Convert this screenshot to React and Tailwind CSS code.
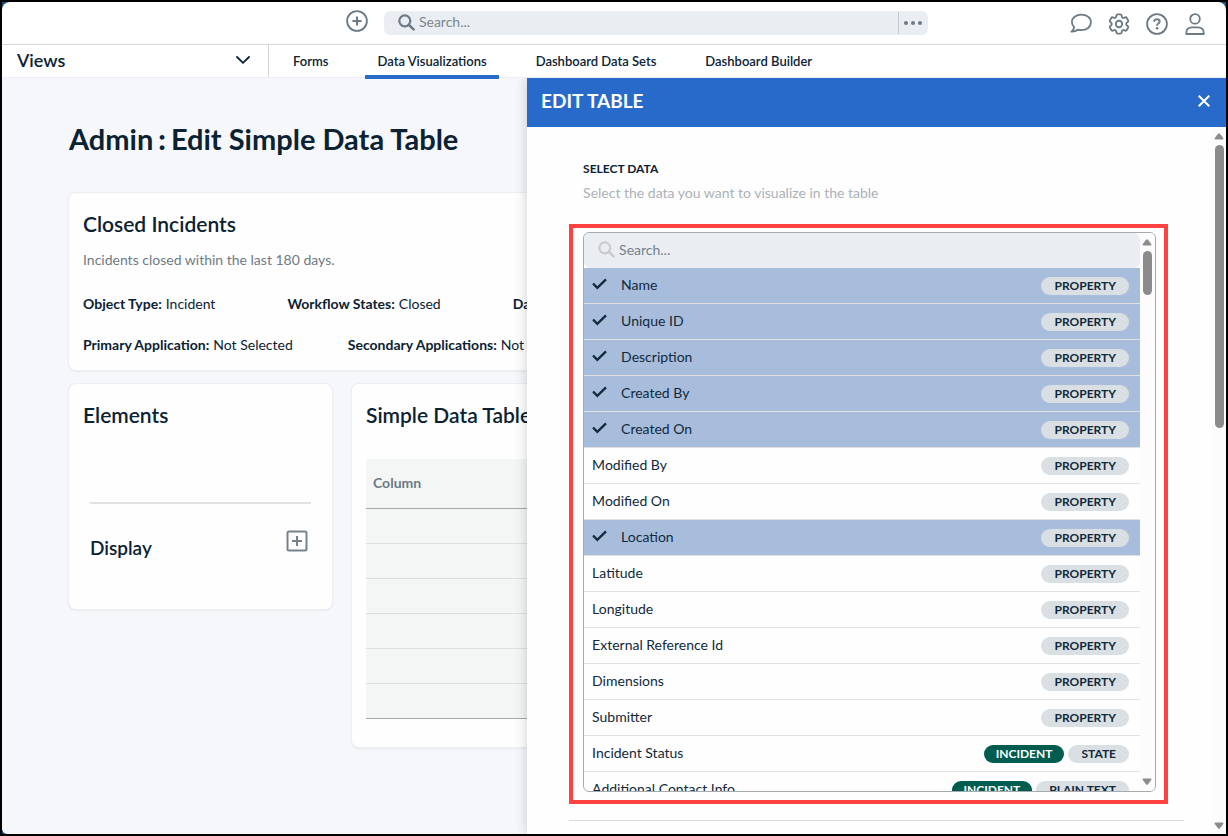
import { useState } from 'react';
import clsx from 'clsx';

const tabs = [
  { label: 'Forms' },
  { label: 'Data Visualizations', active: true },
  { label: 'Dashboard Data Sets' },
  { label: 'Dashboard Builder' },
];

const fields = [
  { name: 'Name', type: 'PROPERTY', selected: true },
  { name: 'Unique ID', type: 'PROPERTY', selected: true },
  { name: 'Description', type: 'PROPERTY', selected: true },
  { name: 'Created By', type: 'PROPERTY', selected: true },
  { name: 'Created On', type: 'PROPERTY', selected: true },
  { name: 'Modified By', type: 'PROPERTY' },
  { name: 'Modified On', type: 'PROPERTY' },
  { name: 'Location', type: 'PROPERTY', selected: true },
  { name: 'Latitude', type: 'PROPERTY' },
  { name: 'Longitude', type: 'PROPERTY' },
  { name: 'External Reference Id', type: 'PROPERTY' },
  { name: 'Dimensions', type: 'PROPERTY' },
  { name: 'Submitter', type: 'PROPERTY' },
  { name: 'Incident Status', type: 'STATE', owner: 'INCIDENT' },
  { name: 'Additional Contact Info', type: 'PLAIN TEXT', owner: 'INCIDENT' },
];

function SearchIcon({ className }) {
  return (
    <svg
      viewBox="0 0 17 17"
      className={clsx('mb-[2px] h-[17px] w-[17px] shrink-0', className)}
      fill="none"
      stroke="currentColor"
      strokeWidth="2.2"
      strokeLinecap="round"
      aria-hidden="true"
    >
      <circle cx="6.8" cy="6.8" r="5.5" />
      <path d="M11 11l4.6 4.4" strokeWidth="2.6" />
    </svg>
  );
}

function CirclePlusIcon() {
  return (
    <svg
      viewBox="0 0 22 22"
      className="h-[22px] w-[22px]"
      fill="none"
      stroke="currentColor"
      strokeLinecap="round"
      aria-hidden="true"
    >
      <circle cx="11" cy="11" r="9.9" strokeWidth="1.8" />
      <path d="M11 7.2v7.6M7.2 11h7.6" strokeWidth="2" />
    </svg>
  );
}

function ChatIcon() {
  return (
    <svg
      viewBox="0 0 22 22"
      className="h-[22px] w-[22px]"
      fill="none"
      stroke="currentColor"
      strokeWidth="1.8"
      strokeLinejoin="round"
      aria-hidden="true"
    >
      <path d="M11.4 1.7C6 1.7 1.9 4.800 1.900 8.900c0 2.200.9 4 2.400 5.300-.3 1.700-1.200 3.100-2.900 4.400 2.500.2 4.700-.5 6.300-1.900 1.200.4 2.400.5 3.700.5 5.400 0 9.500-3.400 9.500-7.900S16.800 1.700 11.400 1.700z" />
    </svg>
  );
}

function GearIcon() {
  return (
    <svg
      viewBox="1.8 1.8 20.4 20.4"
      className="h-[22px] w-[22px]"
      fill="none"
      stroke="currentColor"
      strokeWidth="1.7"
      strokeLinejoin="round"
      aria-hidden="true"
    >
      <path d="M9.594 3.94c.09-.542.56-.94 1.11-.94h2.593c.55 0 1.020.398 1.110.940l.213 1.281c.063.374.313.686.645.870.074.040.147.083.220.127.325.196.720.257 1.075.124l1.217-.456a1.125 1.125 0 0 1 1.370.490l1.296 2.247a1.125 1.125 0 0 1-.260 1.431l-1.003.827c-.293.241-.438.613-.430.992a7.723 7.723 0 0 1 0 .255c-.008.378.137.750.430.991l1.004.827c.424.350.534.955.260 1.430l-1.298 2.247a1.125 1.125 0 0 1-1.369.491l-1.217-.456c-.355-.133-.750-.072-1.076.124a6.470 6.470 0 0 1-.220.128c-.331.183-.581.495-.644.869l-.213 1.281c-.090.543-.560.940-1.110.940h-2.594c-.550 0-1.019-.398-1.110-.940l-.213-1.281c-.062-.374-.312-.686-.644-.870a6.520 6.520 0 0 1-.220-.127c-.325-.196-.720-.257-1.076-.124l-1.217.456a1.125 1.125 0 0 1-1.369-.490l-1.297-2.247a1.125 1.125 0 0 1 .260-1.431l1.004-.827c.292-.240.437-.613.430-.991a6.932 6.932 0 0 1 0-.255c.007-.380-.138-.751-.430-.992l-1.004-.827a1.125 1.125 0 0 1-.260-1.430l1.297-2.247a1.125 1.125 0 0 1 1.370-.491l1.216.456c.356.133.751.072 1.076-.124.072-.044.146-.086.220-.128.332-.183.582-.495.644-.869l.214-1.280z" />
      <circle cx="12" cy="12" r="3" />
    </svg>
  );
}

function HelpIcon() {
  return (
    <svg
      viewBox="0 0 22 22"
      className="h-[22px] w-[22px]"
      fill="none"
      stroke="currentColor"
      strokeWidth="1.8"
      strokeLinecap="round"
      strokeLinejoin="round"
      aria-hidden="true"
    >
      <circle cx="11" cy="11" r="9.9" />
      <path d="M8.2 8c.2-1.2 1.2-1.800 2.600-1.800 1.700 0 2.900.8 2.900 2.300 0 1.900-2.600 1.900-2.600 3.600" strokeWidth="1.9" />
      <circle cx="11.1" cy="15.2" r="1.3" fill="currentColor" stroke="none" />
    </svg>
  );
}

function PersonIcon() {
  return (
    <svg
      viewBox="0 0 22 22"
      className="h-[22px] w-[22px]"
      fill="none"
      stroke="currentColor"
      strokeWidth="1.8"
      strokeLinejoin="round"
      aria-hidden="true"
    >
      <circle cx="11" cy="5.9" r="4.8" />
      <path d="M2.3 21v-1.300c0-3.300 2.300-5.400 5.500-5.400h6.400c3.200 0 5.500 2.100 5.500 5.400V21z" />
    </svg>
  );
}

function Scrollbar({ thumbClass, className }) {
  return (
    <div
      className={clsx(
        'flex w-[14px] shrink-0 flex-col items-center bg-[#fcfcfc] text-[#8b8b8b]',
        className
      )}
      aria-hidden="true"
    >
      <svg viewBox="0 0 10 7" className="h-[7px] w-[10px]" fill="currentColor">
        <path d="M4 .8q1-1 2 0L9.2 5q.6 1.500-.7 1.500h-7Q.2 6.500.8 5z" />
      </svg>
      <div className={clsx('mt-[5px] w-[9px] rounded-full bg-[#8b8b8b]', thumbClass)} />
      <svg viewBox="0 0 10 7" className="mt-auto h-[7px] w-[10px]" fill="currentColor">
        <path d="M4 6.200q1 1 2 0L9.200 2Q9.800.5 8.500.5h-7Q.2.5.8 2z" />
      </svg>
    </div>
  );
}

function Pill({ dark, children }) {
  return (
    <span
      className={clsx(
        'flex h-[18px] items-center rounded-full text-xs font-bold',
        dark ? 'bg-[#005c4f] px-3 text-white' : 'bg-[#dadfe3] px-[13px] text-[#10293b]'
      )}
    >
      {children}
    </span>
  );
}

function FieldRow({ field }) {
  const [checked, setChecked] = useState(Boolean(field.selected));
  return (
    <li>
      <label
        className={clsx(
          'relative flex h-9 items-center border-b border-[#dfe1e3] pr-[11px] pl-2',
          checked && 'bg-[#a8bddc]'
        )}
      >
        <input
          type="checkbox"
          className="sr-only"
          checked={checked}
          onChange={(e) => setChecked(e.target.checked)}
        />
        {checked && (
          <svg
            viewBox="0 0 15 12"
            className="mr-[14px] mb-[3px] h-3 w-[15px]"
            fill="none"
            stroke="currentColor"
            strokeWidth="2.3"
            aria-hidden="true"
          >
            <path d="M1 5.500l4.300 4.400L14 1.400" />
          </svg>
        )}
        <span className="flex-1 truncate pb-[2px]">{field.name}</span>
        <span className="flex gap-1">
          {field.owner && <Pill dark>{field.owner}</Pill>}
          <Pill>{field.type}</Pill>
        </span>
      </label>
    </li>
  );
}

function Header() {
  return (
    <header className="flex h-[43px] shrink-0 items-center border-b border-[#d5d7da] pr-5 pl-[28.1%] text-[#6c7a86]">
      <button type="button" aria-label="Create" className="-mt-1 mr-4">
        <CirclePlusIcon />
      </button>
      <div className="flex h-6 max-w-[544px] flex-1 items-center rounded-md bg-[#eaedf2]">
        <SearchIcon className="ml-[14px]" />
        <input
          type="text"
          aria-label="Search"
          placeholder="Search..."
          className="ml-1 min-w-0 flex-1 pb-[2px] outline-none placeholder:text-[#7b8790]"
        />
        <button
          type="button"
          aria-label="Search options"
          className="flex h-[22px] w-[30px] items-center justify-center gap-[3px] border-l border-[#c4c7ca]"
        >
          <span className="h-1 w-1 rounded-full bg-[#6c7a86]" />
          <span className="h-1 w-1 rounded-full bg-[#6c7a86]" />
          <span className="h-1 w-1 rounded-full bg-[#6c7a86]" />
        </button>
      </div>
      <div className="ml-auto flex items-center gap-4 pt-[2px]">
        <button type="button" aria-label="Messages">
          <ChatIcon />
        </button>
        <button type="button" aria-label="Settings">
          <GearIcon />
        </button>
        <button type="button" aria-label="Help">
          <HelpIcon />
        </button>
        <button type="button" aria-label="Profile">
          <PersonIcon />
        </button>
      </div>
    </header>
  );
}

function Nav() {
  return (
    <nav className="relative z-10 flex h-[33px] shrink-0 border-b border-[#eceff3] bg-white">
      <button
        type="button"
        className="flex w-[267px] shrink-0 items-center justify-between border-r border-[#d5d7da] pr-[18px] pb-[2px] pl-[15px] text-lg leading-none font-semibold"
      >
        Views
        <svg
          viewBox="0 0 14 8"
          className="h-2 w-[14px]"
          fill="none"
          stroke="currentColor"
          strokeWidth="1.8"
          strokeLinecap="round"
          aria-hidden="true"
        >
          <path d="M1 1l6 5.800L13 1" />
        </svg>
      </button>
      <div className="flex gap-[25px] pl-3 text-[13px] font-semibold">
        {tabs.map((tab) => (
          <a
            key={tab.label}
            href="#"
            className={clsx(
              'flex h-[34px] items-center border-b-4 px-3 pt-[2px] whitespace-nowrap',
              tab.active ? 'border-[#286aca]' : 'border-transparent'
            )}
          >
            {tab.label}
          </a>
        ))}
      </div>
    </nav>
  );
}

function Card({ title, className, children }) {
  return (
    <section
      className={clsx(
        'rounded-lg border border-[#eceef2] bg-[#fefefe] px-[14px] shadow-xs',
        className
      )}
    >
      <h2 className="pt-[17px] text-[21px] leading-7 font-semibold whitespace-nowrap">{title}</h2>
      {children}
    </section>
  );
}

function Detail({ label, children }) {
  return (
    <div className="flex gap-1">
      <dt className="font-bold">{label}</dt>
      <dd>{children}</dd>
    </div>
  );
}

function Builder() {
  return (
    <main className="h-full overflow-hidden pt-[41px] pl-[66px] whitespace-nowrap">
      <h1 className="flex gap-[5px] pl-px text-[29px] leading-10 font-bold">
        <span>Admin</span>
        <span className="font-black">:</span>
        <span>Edit Simple Data Table</span>
      </h1>
      <Card title="Closed Incidents" className="mt-[33px] h-[179px]">
        <p className="mt-3 leading-5 text-[#6f7b85]">
          Incidents closed within the last 180 days.
        </p>
        <dl className="mt-6 flex gap-[72px] leading-5">
          <Detail label="Object Type:">Incident</Detail>
          <Detail label="Workflow States:">Closed</Detail>
          <Detail label="Data Set Type:">Incident</Detail>
        </dl>
        <dl className="mt-[21px] flex gap-[55px] leading-5">
          <Detail label="Primary Application:">Not Selected</Detail>
          <Detail label="Secondary Applications:">Not Selected</Detail>
        </dl>
      </Card>
      <div className="mt-3 flex items-start gap-[18px]">
        <Card title="Elements" className="h-[227px] w-[265px] shrink-0">
          <div className="mt-[73px] mr-[7px] ml-[7px] flex items-start justify-between border-t-2 border-[#e1e3e3] pt-[26px]">
            <h3 className="pt-[6px] text-[19px] leading-6 font-semibold">Display</h3>
            <button type="button" aria-label="Add display element" className="mr-[3px] text-[#76828b]">
              <svg
                viewBox="0 0 22 22"
                className="h-[22px] w-[22px]"
                fill="none"
                stroke="currentColor"
                strokeWidth="2"
                aria-hidden="true"
              >
                <rect x="1.5" y="1.5" width="19" height="19" rx="1.500" />
                <path d="M11 6v10M6 11h10" />
              </svg>
            </button>
          </div>
        </Card>
        <Card title="Simple Data Table" className="h-[365px] flex-1">
          <table className="mt-[30px] w-full bg-[#f4f6f6] text-left">
            <thead>
              <tr className="h-[49px] border-b border-[#a3a9ae]">
                <th className="px-[7px] font-bold text-[#6c7a86]">Column</th>
              </tr>
            </thead>
            <tbody>
              {[1, 2, 3, 4, 5, 6].map((row) => (
                <tr key={row} className="h-[35px] border-b border-[#dddfe1] last:border-[#a3a9ae]">
                  <td />
                </tr>
              ))}
            </tbody>
          </table>
        </Card>
      </div>
    </main>
  );
}

function EditTableDrawer() {
  return (
    <aside className="absolute top-0 right-0 bottom-0 flex w-[57.1%] flex-col bg-[#fefefe] shadow-[0_0_12px_rgba(0,0,0,0.2)]">
      <div className="flex h-[49px] shrink-0 items-center justify-between bg-[#286aca] pr-4 pb-1 pl-[14px] text-white">
        <h2 className="text-[19px] font-bold">EDIT TABLE</h2>
        <button type="button" aria-label="Close">
          <svg
            viewBox="0 0 12 12"
            className="h-3 w-3"
            fill="none"
            stroke="currentColor"
            strokeWidth="2"
            aria-hidden="true"
          >
            <path d="M.7.7l10.600 10.600M11.300.7L.7 11.300" />
          </svg>
        </button>
      </div>
      <div className="flex min-h-0 flex-1">
        <div className="min-w-0 flex-1 overflow-hidden pt-8 pr-7 pl-[42px]">
          <h3 className="pl-[14px] text-xs leading-5 font-bold">SELECT DATA</h3>
          <p className="mt-1 pl-[14px] leading-5 text-[#abb1b7]">
            Select the data you want to visualize in the table
          </p>
          <div className="mt-[21px] mr-4 border-4 border-[#fe4242] pt-1 pr-2 pb-2 pl-[10px]">
            <div className="flex h-[560px] overflow-hidden rounded-md border border-[#a6abb0]">
              <div className="min-w-0 flex-1 overflow-hidden">
                <div className="flex h-[35px] items-center rounded-md bg-[#eaedf2] pl-[14px] text-[#c9cbcd]">
                  <SearchIcon />
                  <input
                    type="text"
                    aria-label="Search fields"
                    placeholder="Search..."
                    className="ml-1 min-w-0 flex-1 pb-[2px] text-[#10293b] outline-none placeholder:text-[#75818b]"
                  />
                </div>
                <ul className="text-[#10293b]">
                  {fields.map((field) => (
                    <FieldRow key={field.name} field={field} />
                  ))}
                </ul>
              </div>
              <Scrollbar className="mr-px pt-[6px] pb-[6px]" thumbClass="h-[44px]" />
            </div>
          </div>
          <hr className="mt-4 border-[#d8dadc]" />
        </div>
        <Scrollbar className="pt-[6px] pb-[5px]" thumbClass="h-[283px]" />
      </div>
    </aside>
  );
}

export default function App() {
  return (
    <div className="h-screen border-2 border-black bg-[#1d4d7a] font-['Lato',sans-serif] text-sm text-[#0b2233]">
      <div className="flex h-full flex-col rounded-t-lg rounded-b-md bg-white">
        <Header />
        <Nav />
        <div className="relative min-h-0 flex-1 rounded-bl-md bg-[#f5f7fb]">
          <Builder />
          <EditTableDrawer />
        </div>
      </div>
    </div>
  );
}
